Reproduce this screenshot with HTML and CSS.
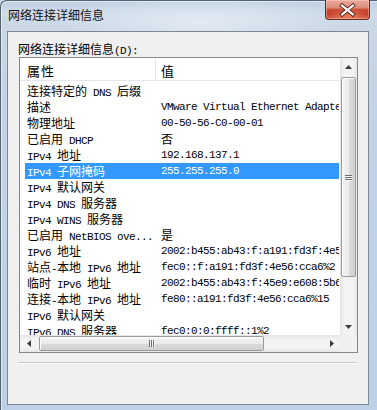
FILE: index.html
```html
<!DOCTYPE html>
<html>
<head>
<meta charset="utf-8">
<title>网络连接详细信息</title>
<link rel="stylesheet" href="styles.css">
</head>
<body>
<div class="window">
  <div class="titlebar">
    <span class="title">网络连接详细信息</span>
    <div class="close">
      <svg width="45" height="20" viewBox="0 0 45 20">
        <path d="M17.5 6.5 L28.5 15.5 M28.5 6.5 L17.5 15.5" stroke="#5a1f17" stroke-width="4" stroke-linecap="square"/>
        <path d="M17.5 6.5 L28.5 15.5 M28.5 6.5 L17.5 15.5" stroke="#ffffff" stroke-width="2.2" stroke-linecap="square"/>
      </svg>
    </div>
  </div>
  <div class="client">
    <div class="label">网络连接详细信息<span class="l">(D):</span></div>
    <div class="list">
      <div class="view">
        <div class="header">
          <div class="hc hc1">属性</div>
          <div class="hc hc2">值</div>
        </div>
        <div class="rows">
          <div class="row"><div class="c1">连接特定的<span class="l"> DNS </span>后缀</div><div class="c2"></div></div>
          <div class="row"><div class="c1">描述</div><div class="c2 l">VMware Virtual Ethernet Adapter for VMnet1</div></div>
          <div class="row"><div class="c1">物理地址</div><div class="c2 l">00-50-56-C0-00-01</div></div>
          <div class="row"><div class="c1">已启用<span class="l"> DHCP</span></div><div class="c2">否</div></div>
          <div class="row"><div class="c1"><span class="l">IPv4 </span>地址</div><div class="c2 l">192.168.137.1</div></div>
          <div class="row sel"><div class="c1"><span class="l">IPv4 </span>子网掩码</div><div class="c2 l">255.255.255.0</div></div>
          <div class="row"><div class="c1"><span class="l">IPv4 </span>默认网关</div><div class="c2"></div></div>
          <div class="row"><div class="c1"><span class="l">IPv4 DNS </span>服务器</div><div class="c2"></div></div>
          <div class="row"><div class="c1"><span class="l">IPv4 WINS </span>服务器</div><div class="c2"></div></div>
          <div class="row"><div class="c1">已启用<span class="l"> NetBIOS ove...</span></div><div class="c2">是</div></div>
          <div class="row"><div class="c1"><span class="l">IPv6 </span>地址</div><div class="c2 l">2002:b455:ab43:f:a191:fd3f:4e56:cca6</div></div>
          <div class="row"><div class="c1">站点<span class="l">-</span>本地<span class="l"> IPv6 </span>地址</div><div class="c2 l">fec0::f:a191:fd3f:4e56:cca6%2</div></div>
          <div class="row"><div class="c1">临时<span class="l"> IPv6 </span>地址</div><div class="c2 l">2002:b455:ab43:f:45e9:e608:5b6e:2c11</div></div>
          <div class="row"><div class="c1">连接<span class="l">-</span>本地<span class="l"> IPv6 </span>地址</div><div class="c2 l">fe80::a191:fd3f:4e56:cca6%15</div></div>
          <div class="row"><div class="c1"><span class="l">IPv6 </span>默认网关</div><div class="c2"></div></div>
          <div class="row"><div class="c1"><span class="l">IPv6 DNS </span>服务器</div><div class="c2 l">fec0:0:0:ffff::1%2</div></div>
        </div>
      </div>
      <div class="vscroll">
        <div class="sbtn">
          <svg width="7" height="4" viewBox="0 0 7 4"><path d="M0 4 L3.5 0 L7 4 Z" fill="#3c3c3c"/></svg>
        </div>
        <div class="vthumb">
          <div class="grip-v"><i></i><i></i><i></i></div>
        </div>
        <div class="fill"></div>
        <div class="sbtn">
          <svg width="7" height="4" viewBox="0 0 7 4"><path d="M0 0 L3.5 4 L7 0 Z" fill="#3c3c3c"/></svg>
        </div>
      </div>
      <div class="hscroll">
        <div class="sbtn">
          <svg width="4" height="7" viewBox="0 0 4 7"><path d="M4 0 L0 3.5 L4 7 Z" fill="#3c3c3c"/></svg>
        </div>
        <div class="hthumb">
          <div class="grip-h"><i></i><i></i><i></i></div>
        </div>
        <div class="fill"></div>
        <div class="sbtn">
          <svg width="4" height="7" viewBox="0 0 4 7"><path d="M0 0 L4 3.5 L0 7 Z" fill="#3c3c3c"/></svg>
        </div>
      </div>
      <div class="corner"></div>
    </div>
    <div class="sep"></div>
  </div>
</div>
</body>
</html>
```
FILE: styles.css
```css
* {
  box-sizing: border-box;
}

html, body {
  margin: 0;
  padding: 0;
}

body {
  width: 377px;
  height: 410px;
  overflow: hidden;
  background: #c6d6e8;
  font-family: "Noto Sans CJK SC", sans-serif;
  font-size: 12px;
  color: #000;
}

.window {
  width: 377px;
  height: 410px;
  padding: 0 8px 5px 7px;
  display: flex;
  flex-direction: column;
  border-radius: 6px 0 0 0;
  background:
    radial-gradient(ellipse 140px 26px at 200px 22px, rgba(232, 239, 246, 0.8), rgba(232, 239, 246, 0) 100%),
    linear-gradient(180deg, #bfd0e3 0px, #cedbe9 14px, #cad7e5 30px, #c2d3e6 120px, #bdd0e6 100%);
  box-shadow: inset 1px 1px 0 #56636f, inset 2px 2px 0 rgba(255, 255, 255, 0.5);
}

.titlebar {
  height: 31px;
  flex: none;
  display: flex;
  justify-content: space-between;
  align-items: flex-start;
}

.title {
  margin: 7px 0 0 1px;
  line-height: 16px;
  font-size: 12px;
  color: #111;
}

.close {
  width: 45px;
  height: 20px;
  margin-right: -1px;
  border: 1px solid #6b2a20;
  border-top: none;
  border-radius: 0 0 4px 4px;
  background:
    radial-gradient(ellipse 22px 8px at 22px 16px, rgba(240, 150, 110, 0.7), rgba(240, 150, 110, 0) 100%),
    linear-gradient(180deg, #e9aa9c 0%, #dc8a77 40%, #c8462f 52%, #c13b25 75%, #cf5a41 100%);
  box-shadow: inset 0 0 0 1px rgba(255, 210, 200, 0.45);
  display: flex;
}

.close svg {
  display: block;
  margin: -1px 0 0 -1px;
}

.client {
  flex: 1;
  border: 1px solid #7d8894;
  background: #f0f0f0;
  padding: 9px 10px 0 10px;
  display: flex;
  flex-direction: column;
}

.label {
  height: 16px;
  line-height: 16px;
  white-space: nowrap;
}

.l {
  font-family: "Liberation Mono", "DejaVu Sans Mono", monospace;
  font-size: 11px;
  letter-spacing: -0.6px;
}

.list {
  width: 339px;
  height: 296px;
  margin-left: 1px;
  border: 1px solid #828790;
  background: #fff;
  display: grid;
  grid-template-columns: 320px 17px;
  grid-template-rows: 277px 17px;
}

.view {
  overflow: hidden;
  white-space: nowrap;
}

.header {
  height: 23px;
  display: flex;
  border-bottom: 1px solid #e3e6ea;
}

.hc {
  padding-top: 5px;
  line-height: 16px;
  font-size: 13px;
}

.hc1 {
  width: 136px;
  padding-left: 7px;
  border-right: 1px solid #e3e6ea;
  letter-spacing: 1px;
}

.hc2 {
  padding-left: 5px;
}

.rows {
  padding-top: 2px;
}

.row {
  display: flex;
  width: 314px;
  height: 16px;
  line-height: 16px;
  margin-left: 5px;
}

.row .c1 {
  width: 130px;
  flex: none;
  padding-left: 2px;
  overflow: hidden;
}

.row .c2 {
  flex: 1;
  min-width: 0;
  padding-left: 6px;
  overflow: hidden;
}

.row.sel {
  background: #3399ff;
  color: #fff;
}

.vscroll {
  display: flex;
  flex-direction: column;
  background: linear-gradient(90deg, #e4e4e4 0%, #f3f3f3 25%, #f3f3f3 75%, #e6e6e6 100%);
}

.sbtn {
  flex: none;
  width: 17px;
  height: 17px;
  display: flex;
  align-items: center;
  justify-content: center;
}

.sbtn svg {
  display: block;
}

.fill {
  flex: 1;
}

.vthumb {
  flex: none;
  height: 200px;
  margin: 2px 1px 0 1px;
  border: 1px solid #9a9a9a;
  border-radius: 2px;
  background: linear-gradient(90deg, #f4f4f4 0%, #eaeaea 50%, #dadada 51%, #d2d2d2 100%);
  box-shadow: inset 1px 1px 0 #fdfdfd;
  display: flex;
  align-items: center;
  justify-content: center;
}

.grip-v {
  display: flex;
  flex-direction: column;
  gap: 1px;
}

.grip-v i {
  display: block;
  width: 7px;
  height: 1px;
  background: #6f6f6f;
  box-shadow: 0 1px 0 #fafafa;
}

.hscroll {
  display: flex;
  background: linear-gradient(180deg, #e4e4e4 0%, #f3f3f3 25%, #f3f3f3 75%, #e6e6e6 100%);
}

.hthumb {
  flex: none;
  width: 225px;
  margin: 1px 0 1px 2px;
  border: 1px solid #9a9a9a;
  border-radius: 2px;
  background: linear-gradient(180deg, #f4f4f4 0%, #eaeaea 50%, #dadada 51%, #d2d2d2 100%);
  box-shadow: inset 1px 1px 0 #fdfdfd;
  display: flex;
  align-items: center;
  justify-content: center;
}

.grip-h {
  display: flex;
  gap: 1px;
}

.grip-h i {
  display: block;
  width: 1px;
  height: 7px;
  background: #6f6f6f;
  box-shadow: 1px 0 0 #fafafa;
}

.corner {
  background: #f0f0f0;
}

.sep {
  width: 338px;
  height: 2px;
  margin-top: 9px;
  border-top: 1px solid #c4c8cc;
  border-bottom: 1px solid #ffffff;
}
```
